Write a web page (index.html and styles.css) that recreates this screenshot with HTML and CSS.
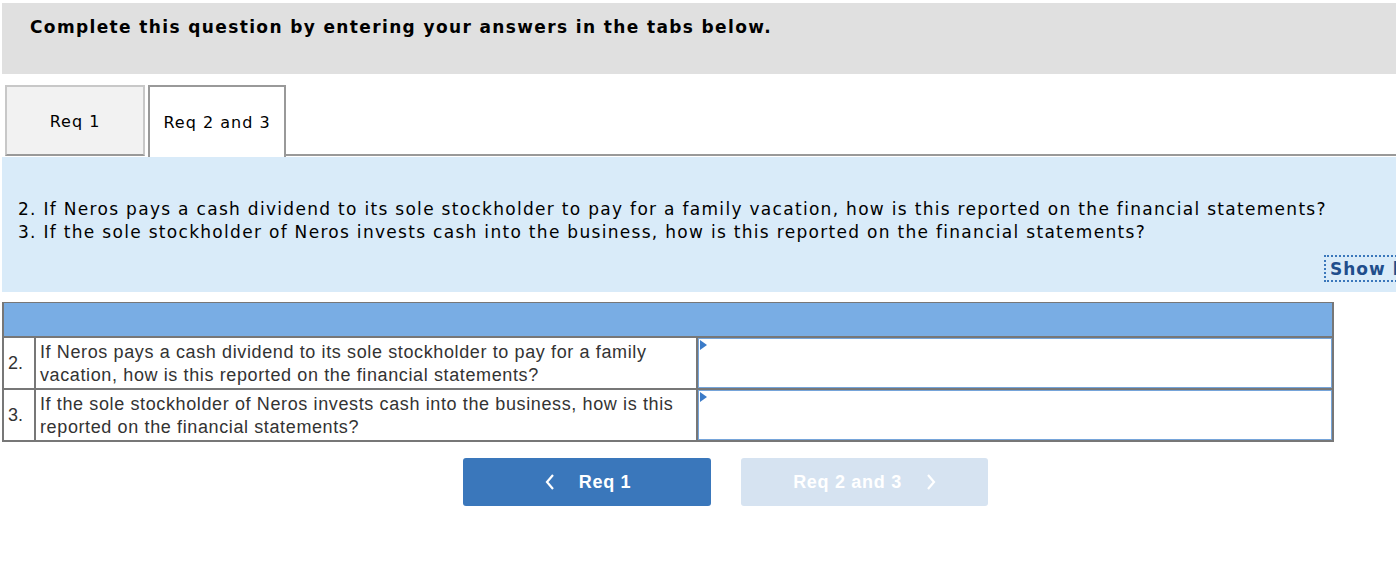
FILE: index.html
```html
<!DOCTYPE html>
<html>
<head>
<meta charset="utf-8">
<link rel="stylesheet" href="styles.css">
</head>
<body>
<div class="page">
  <div class="instructions">
    <h1 class="instructions-title">Complete this question by entering your answers in the tabs below.</h1>
  </div>

  <div class="tabs">
    <div class="tab tab-inactive">Req 1</div>
    <div class="tab tab-active">Req 2 and 3</div>
    <div class="tabs-rest"></div>
  </div>

  <div class="panel">
    <p class="panel-text">2. If Neros pays a cash dividend to its sole stockholder to pay for a family vacation, how is this reported on the financial statements?<br>3. If the sole stockholder of Neros invests cash into the business, how is this reported on the financial statements?</p>
    <div class="panel-links">
      <span class="show-link">Show less ▲</span>
    </div>
  </div>

  <table class="answers">
    <colgroup>
      <col class="col-num">
      <col class="col-question">
      <col class="col-answer">
    </colgroup>
    <tr class="answers-head">
      <td colspan="3"></td>
    </tr>
    <tr class="row-first">
      <td class="num">2.</td>
      <td class="question">If Neros pays a cash dividend to its sole stockholder to pay for a family vacation, how is this reported on the financial statements?</td>
      <td class="answer"><div class="answer-box"><span class="flag"></span></div></td>
    </tr>
    <tr class="row-second">
      <td class="num">3.</td>
      <td class="question">If the sole stockholder of Neros invests cash into the business, how is this reported on the financial statements?</td>
      <td class="answer"><div class="answer-box"><span class="flag"></span></div></td>
    </tr>
  </table>

  <div class="nav">
    <button class="nav-btn nav-prev">
      <svg class="chev" width="10" height="16" viewBox="0 0 10 16"><polyline points="8,1 2,8 8,15" fill="none" stroke="#fff" stroke-width="2.2"/></svg>
      <span>Req 1</span>
    </button>
    <button class="nav-btn nav-next">
      <span>Req 2 and 3</span>
      <svg class="chev chev-right" width="10" height="16" viewBox="0 0 10 16"><polyline points="2,1 8,8 2,15" fill="none" stroke="#fff" stroke-width="2.2"/></svg>
    </button>
  </div>
</div>
</body>
</html>
```

FILE: styles.css
```css
html, body {
  margin: 0;
  padding: 0;
  background: #ffffff;
  overflow: hidden;
}

.page {
  padding: 3px 0 0 2px;
  font-family: "DejaVu Sans", Verdana, sans-serif;
  color: #000;
}

.instructions {
  background: #e0e0e0;
  height: 71px;
  padding: 0 0 0 28px;
  box-sizing: border-box;
}

.instructions-title {
  margin: 0;
  padding-top: 13px;
  font-size: 17px;
  font-weight: bold;
  line-height: 22px;
  letter-spacing: 1.37px;
  white-space: nowrap;
}

.tabs {
  display: flex;
  align-items: flex-end;
  margin-top: 11px;
  height: 71px;
}

.tab {
  box-sizing: border-box;
  height: 71px;
  display: flex;
  align-items: center;
  justify-content: center;
  font-size: 16px;
  letter-spacing: 1px;
  padding-top: 2px;
}

.tab-inactive {
  margin-left: 3px;
  width: 140px;
  background: #f2f2f2;
  border: 2px solid #c8c8c8;
  border-bottom: 2px solid #999;
}

.tab-active {
  margin-left: 3px;
  width: 138px;
  background: #fff;
  border: 2px solid #999;
  border-bottom: none;
  height: 72px;
  margin-bottom: -1px;
  padding-top: 0;
  position: relative;
}

.tabs-rest {
  flex: 1;
  border-bottom: 2px solid #999;
}

.panel {
  background: #d9ebf9;
  height: 135px;
  margin-top: 1px;
  padding: 41px 0 0 16px;
  box-sizing: border-box;
  overflow: hidden;
}

.panel-text {
  margin: 0;
  font-size: 17px;
  line-height: 23px;
  letter-spacing: 1.3px;
  white-space: nowrap;
}

.panel-links {
  display: flex;
  margin-top: 11px;
}

.show-link {
  margin-left: 1306px;
  font-size: 17px;
  font-weight: bold;
  letter-spacing: 1px;
  color: #1f4e8c;
  border: 2px dotted #3a77bb;
  padding: 1px 4px 0 4px;
  line-height: 22px;
  white-space: nowrap;
}

.answers {
  margin-top: 10px;
  border-collapse: collapse;
  table-layout: fixed;
  width: 1330px;
  font-family: "Liberation Sans", Arial, sans-serif;
  font-size: 18px;
  letter-spacing: 0.62px;
  color: #333;
}

.col-num {
  width: 32px;
}

.col-question {
  width: 662px;
}

.col-answer {
  width: 636px;
}

.answers td {
  border: 2px solid #777;
  padding: 0;
}

.answers-head td {
  background: #79ade4;
  height: 33px;
  border-top: 1px solid #777;
}

.num {
  vertical-align: middle;
  padding-left: 4px !important;
  line-height: 23px;
  letter-spacing: 0;
}

.question {
  padding: 3px 2px 2px 4px !important;
  line-height: 22.5px;
  vertical-align: top;
  color: #333;
}

.row-first .answer {
  height: 50px;
}

.row-second .answer {
  height: 48px;
}

.answer-box {
  position: relative;
  height: 100%;
  min-height: 48px;
  border: 1px solid #76a5da;
  box-sizing: border-box;
  background: #fff;
}

.row-first .answer-box {
  min-height: 50px;
}

.flag {
  position: absolute;
  left: 1px;
  top: 1px;
  width: 0;
  height: 0;
  border-top: 5px solid transparent;
  border-bottom: 5px solid transparent;
  border-left: 7px solid #3b7bc8;
}

.nav {
  display: flex;
  gap: 30px;
  margin-top: 16px;
  padding-left: 461px;
}

.nav-btn {
  width: 248px;
  height: 48px;
  border: none;
  border-radius: 3px;
  font-family: "Liberation Sans", Arial, sans-serif;
  font-size: 18px;
  font-weight: bold;
  letter-spacing: 0.7px;
  color: #fff;
  display: flex;
  align-items: center;
  justify-content: center;
  padding: 0;
}

.nav-prev {
  background: #3a77bb;
  padding-left: 2px;
}

.nav-next {
  background: #d6e3f1;
  width: 247px;
  padding-left: 0;
}

.chev {
  display: block;
  margin-right: 24px;
}

.chev-right {
  margin-right: 0;
  margin-left: 24px;
}
```
